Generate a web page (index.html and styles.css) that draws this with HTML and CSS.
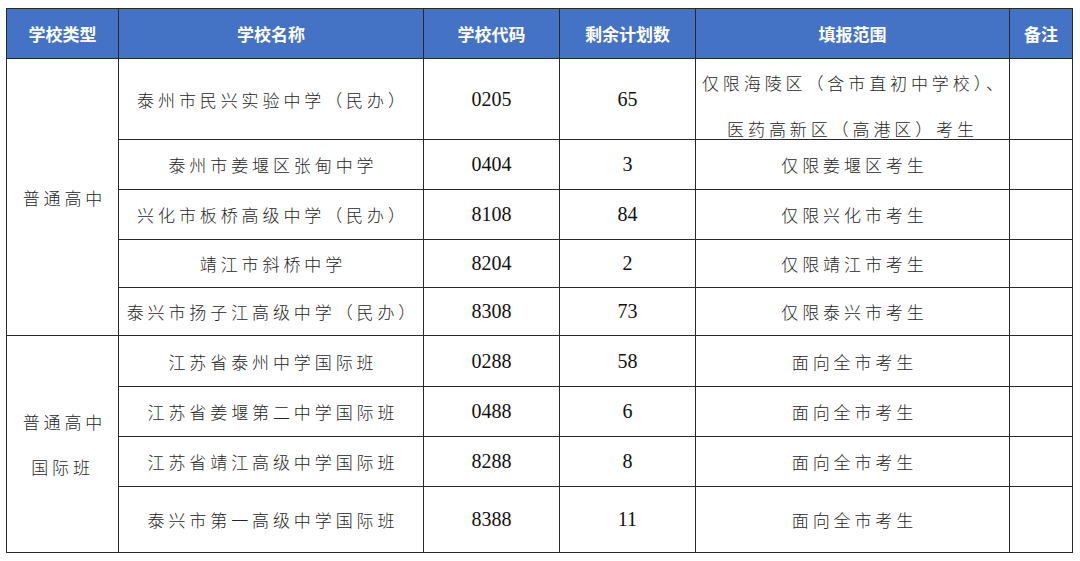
FILE: index.html
```html
<!DOCTYPE html>
<html lang="zh-CN">
<head>
<meta charset="utf-8">
<title>剩余计划</title>
<link rel="stylesheet" href="styles.css">
</head>
<body>
<table class="plan">
  <colgroup>
    <col class="c-type"><col class="c-name"><col class="c-code"><col class="c-num"><col class="c-range"><col class="c-note">
  </colgroup>
  <thead>
    <tr class="head">
      <th>学校类型</th><th>学校名称</th><th>学校代码</th><th>剩余计划数</th><th>填报范围</th><th>备注</th>
    </tr>
  </thead>
  <tbody>
    <tr class="r1">
      <td rowspan="5" class="type">普通高中</td>
      <td class="cn">泰州市民兴实验中学（民办）</td><td class="num">0205</td><td class="num">65</td>
      <td class="cn"><div class="two">仅限海陵区（含市直初中学校）、<br>医药高新区（高港区）考生</div></td><td></td>
    </tr>
    <tr class="r50"><td class="cn">泰州市姜堰区张甸中学</td><td class="num">0404</td><td class="num">3</td><td class="cn">仅限姜堰区考生</td><td></td></tr>
    <tr class="r50"><td class="cn">兴化市板桥高级中学（民办）</td><td class="num">8108</td><td class="num">84</td><td class="cn">仅限兴化市考生</td><td></td></tr>
    <tr class="r48"><td class="cn">靖江市斜桥中学</td><td class="num">8204</td><td class="num">2</td><td class="cn">仅限靖江市考生</td><td></td></tr>
    <tr class="r48"><td class="cn">泰兴市扬子江高级中学（民办）</td><td class="num">8308</td><td class="num">73</td><td class="cn">仅限泰兴市考生</td><td></td></tr>
    <tr class="r51">
      <td rowspan="4" class="type"><div class="stack">普通高中<br>国际班</div></td>
      <td class="cn">江苏省泰州中学国际班</td><td class="num">0288</td><td class="num">58</td><td class="cn">面向全市考生</td><td></td>
    </tr>
    <tr class="r50"><td class="cn">江苏省姜堰第二中学国际班</td><td class="num">0488</td><td class="num">6</td><td class="cn">面向全市考生</td><td></td></tr>
    <tr class="r50"><td class="cn">江苏省靖江高级中学国际班</td><td class="num">8288</td><td class="num">8</td><td class="cn">面向全市考生</td><td></td></tr>
    <tr class="r66"><td class="cn">泰兴市第一高级中学国际班</td><td class="num">8388</td><td class="num">11</td><td class="cn">面向全市考生</td><td></td></tr>
  </tbody>
</table>
</body>
</html>
```

FILE: styles.css
```css
html, body {
  margin: 0;
  padding: 0;
  background: #ffffff;
}
body {
  padding: 8px 0 0 6px;
}
.plan {
  border-collapse: collapse;
  table-layout: fixed;
  width: 1067px;
  font-family: "Noto Sans CJK SC", "Noto Sans", sans-serif;
  color: #262626;
}
.c-type { width: 112px; }
.c-name { width: 305px; }
.c-code { width: 136px; }
.c-num { width: 136px; }
.c-range { width: 314px; }
.c-note { width: 63px; }

.plan th, .plan td {
  border: 1px solid #2a2a2a;
  padding: 0;
  text-align: center;
  vertical-align: middle;
}
.head th {
  height: 49px;
  background: #4472c4;
  color: #ffffff;
  font-weight: 700;
  font-size: 17px;
  letter-spacing: 0;
  border-color: #2a2a2a;
}
.cn, .type {
  font-size: 17px;
  font-weight: 300;
  letter-spacing: 3.9px;
  text-indent: 3.9px;
}
.num {
  font-family: "Liberation Serif", "Times New Roman", serif;
  font-size: 20px;
  color: #111111;
}
.r1 td { height: 80px; }
.r50 td { height: 49px; }
.r48 td { height: 47px; }
.r51 td { height: 50px; }
.r66 td { height: 65px; }
.two {
  height: 80px;
  line-height: 46px;
  padding-top: 1px;
  box-sizing: border-box;
  white-space: nowrap;
}
.stack {
  line-height: 45px;
}
```
